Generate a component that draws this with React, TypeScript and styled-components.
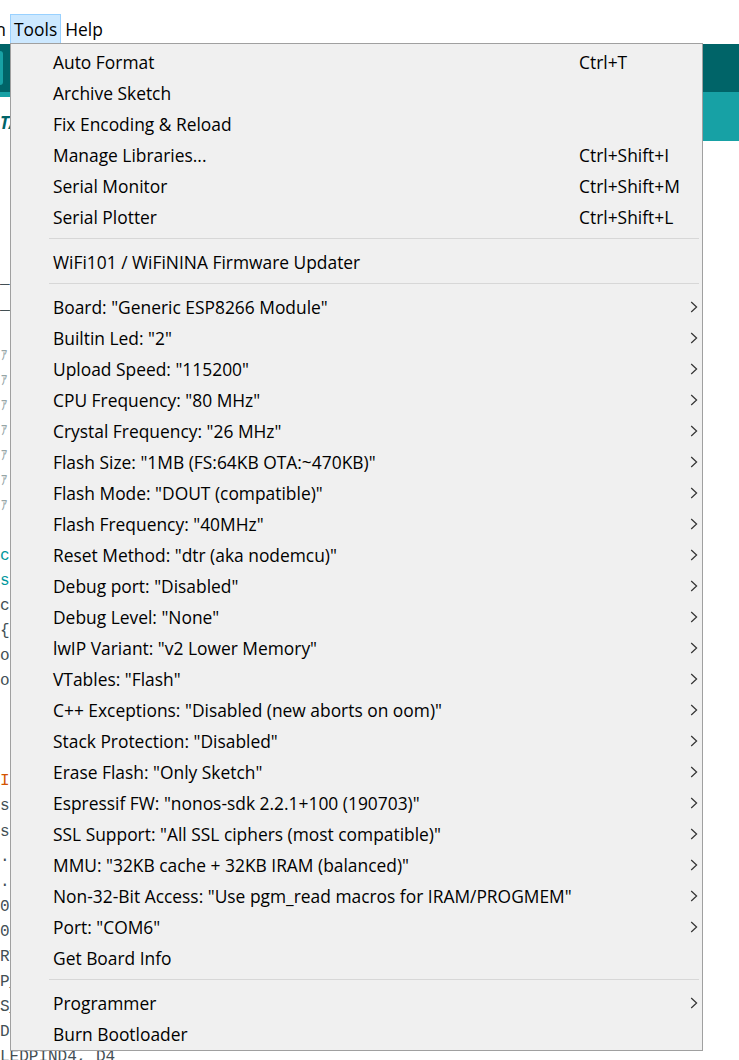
import React from "react";
import styled, { createGlobalStyle } from "styled-components";

const GlobalStyle = createGlobalStyle`
  html, body { margin: 0; padding: 0; background: #ffffff; }
  body { overflow: hidden; }
  #root { width: 739px; height: 1060px; }
`;

const UI_FONT = `"Open Sans", "Noto Sans", sans-serif`;
const MONO_FONT = `"Liberation Mono", "DejaVu Sans Mono", "Noto Sans CJK JP", monospace`;

const Page = styled.div`
  position: relative;
  width: 739px;
  height: 1060px;
  overflow: hidden;
  background: #ffffff;
  display: flex;
  flex-direction: column;
  font-family: ${UI_FONT};
`;

const TitleStrip = styled.div`
  height: 14px;
  flex: none;
  background: #ffffff;
`;

const MenuBar = styled.div`
  height: 30px;
  flex: none;
  display: flex;
  align-items: stretch;
  background: #ffffff;
`;

const MenuClip = styled.div`
  width: 10px;
  overflow: hidden;
  display: flex;
  justify-content: flex-end;
`;

const MenuBarItem = styled.div<{ $active?: boolean }>`
  display: flex;
  align-items: center;
  padding: 0 3px;
  height: 28px;
  border: 1px solid ${(p) => (p.$active ? "#99d1ff" : "transparent")};
  background: ${(p) => (p.$active ? "#cce8ff" : "transparent")};
  font-size: 17.4px;
  color: #000000;
  white-space: nowrap;
  flex: none;
`;

const Toolbar = styled.div`
  height: 48px;
  flex: none;
  background: #006468;
  display: flex;
  align-items: center;
`;

const ToolButton = styled.div`
  width: 32px;
  height: 34px;
  margin-left: -29px;
  background: #17a1a5;
  border-radius: 3px;
`;

const TabBar = styled.div`
  height: 49px;
  flex: none;
  box-sizing: border-box;
  padding-top: 5px;
  background: #17a1a5;
  display: flex;
  align-items: stretch;
`;

const Tab = styled.div`
  background: #ffffff;
  color: #006468;
  font-family: ${UI_FONT};
  font-weight: 700;
  font-style: italic;
  font-size: 17px;
  display: flex;
  align-items: center;
  padding: 6px 12px 0 0;
  white-space: nowrap;
`;

const Editor = styled.div`
  flex: 1;
  padding-top: 1px;
  background: #ffffff;
  display: flex;
  flex-direction: column;
`;

const CodeLine = styled.div<{ $tone: string }>`
  height: 25.1px;
  line-height: 25.1px;
  flex: none;
  font-family: ${MONO_FONT};
  font-size: 16px;
  color: ${(p) => p.$tone};
  white-space: pre;
`;

const DropMenu = styled.div`
  position: absolute;
  top: 43px;
  left: 10px;
  width: 693px;
  box-sizing: border-box;
  border: 1px solid #a0a0a0;
  background: #f0f0f0;
  padding: 2px 0 1px 0;
  display: flex;
  flex-direction: column;
  font-family: ${UI_FONT};
  font-size: 17.4px;
  color: #000000;
`;

const Row = styled.div`
  height: 31px;
  display: grid;
  grid-template-columns: 526px 1fr 13px;
  align-items: center;
  padding: 0 2px 0 42px;
  white-space: nowrap;
`;

const Label = styled.span``;

const Shortcut = styled.span``;

const Chevron = styled.span`
  display: flex;
  align-items: center;
  justify-content: center;
`;

const Separator = styled.div`
  height: 14px;
  box-sizing: border-box;
  padding: 6px 3px 7px 38px;
  &::after {
    content: "";
    display: block;
    height: 1px;
    background: #d7d7d7;
  }
`;

type Item = { label: string; shortcut?: string; sub?: boolean };

const sections: Item[][] = [
  [
    { label: "Auto Format", shortcut: "Ctrl+T" },
    { label: "Archive Sketch" },
    { label: "Fix Encoding & Reload" },
    { label: "Manage Libraries...", shortcut: "Ctrl+Shift+I" },
    { label: "Serial Monitor", shortcut: "Ctrl+Shift+M" },
    { label: "Serial Plotter", shortcut: "Ctrl+Shift+L" },
  ],
  [{ label: "WiFi101 / WiFiNINA Firmware Updater" }],
  [
    { label: 'Board: "Generic ESP8266 Module"', sub: true },
    { label: 'Builtin Led: "2"', sub: true },
    { label: 'Upload Speed: "115200"', sub: true },
    { label: 'CPU Frequency: "80 MHz"', sub: true },
    { label: 'Crystal Frequency: "26 MHz"', sub: true },
    { label: 'Flash Size: "1MB (FS:64KB OTA:~470KB)"', sub: true },
    { label: 'Flash Mode: "DOUT (compatible)"', sub: true },
    { label: 'Flash Frequency: "40MHz"', sub: true },
    { label: 'Reset Method: "dtr (aka nodemcu)"', sub: true },
    { label: 'Debug port: "Disabled"', sub: true },
    { label: 'Debug Level: "None"', sub: true },
    { label: 'lwIP Variant: "v2 Lower Memory"', sub: true },
    { label: 'VTables: "Flash"', sub: true },
    { label: 'C++ Exceptions: "Disabled (new aborts on oom)"', sub: true },
    { label: 'Stack Protection: "Disabled"', sub: true },
    { label: 'Erase Flash: "Only Sketch"', sub: true },
    { label: 'Espressif FW: "nonos-sdk 2.2.1+100 (190703)"', sub: true },
    { label: 'SSL Support: "All SSL ciphers (most compatible)"', sub: true },
    { label: 'MMU: "32KB cache + 32KB IRAM (balanced)"', sub: true },
    { label: 'Non-32-Bit Access: "Use pgm_read macros for IRAM/PROGMEM"', sub: true },
    { label: 'Port: "COM6"', sub: true },
    { label: "Get Board Info" },
  ],
  [{ label: "Programmer", sub: true }, { label: "Burn Bootloader" }],
];

const GRAY = "#95a5a6";
const TEXT = "#434f54";
const TEAL = "#00979c";
const ORANGE = "#d35400";

const code: [string, string][] = [
  ["", TEXT],
  ["", TEXT],
  ["", TEXT],
  ["", TEXT],
  ["", TEXT],
  ["_", TEXT],
  ["__", TEXT],
  ["", TEXT],
  ["ｧ", GRAY],
  ["ｧ", GRAY],
  ["ｧ", GRAY],
  ["ｧ", GRAY],
  ["ｧ", GRAY],
  ["ｧ", GRAY],
  ["ｧ", GRAY],
  ["", TEXT],
  ["cs", TEAL],
  ["sa", TEAL],
  ["cs", TEXT],
  ["{", TEXT],
  ["os", TEXT],
  ["os", TEXT],
  ["", TEXT],
  ["", TEXT],
  ["", TEXT],
  ["II", ORANGE],
  ["ss", TEXT],
  ["st", TEXT],
  [".", TEXT],
  ["..", TEXT],
  ["0.", TEXT],
  ["0", TEXT],
  ["RV", TEXT],
  ["P_", TEXT],
  ["S_", TEXT],
  ["DE", TEXT],
  ["LEDPIND4, D4", TEXT],
];

const ChevronIcon = () => (
  <svg width="8" height="12" viewBox="0 0 8 12">
    <polyline
      points="1.2,1 6.6,6 1.2,11"
      fill="none"
      stroke="#333333"
      strokeWidth="1.2"
    />
  </svg>
);

export default function App() {
  return (
    <>
      <GlobalStyle />
      <Page>
        <TitleStrip />
        <MenuBar>
          <MenuClip>
            <MenuBarItem>Sketch</MenuBarItem>
          </MenuClip>
          <MenuBarItem $active>Tools</MenuBarItem>
          <MenuBarItem>Help</MenuBarItem>
        </MenuBar>
        <Toolbar>
          <ToolButton />
        </Toolbar>
        <TabBar>
          <Tab>TANK</Tab>
        </TabBar>
        <Editor>
          {code.map(([t, c], i) => (
            <CodeLine key={i} $tone={c}>
              {t}
            </CodeLine>
          ))}
        </Editor>
        <DropMenu>
          {sections.map((sec, si) => (
            <React.Fragment key={si}>
              {si > 0 && <Separator />}
              {sec.map((it) => (
                <Row key={it.label}>
                  <Label>{it.label}</Label>
                  <Shortcut>{it.shortcut ?? ""}</Shortcut>
                  <Chevron>{it.sub ? <ChevronIcon /> : null}</Chevron>
                </Row>
              ))}
            </React.Fragment>
          ))}
        </DropMenu>
      </Page>
    </>
  );
}
